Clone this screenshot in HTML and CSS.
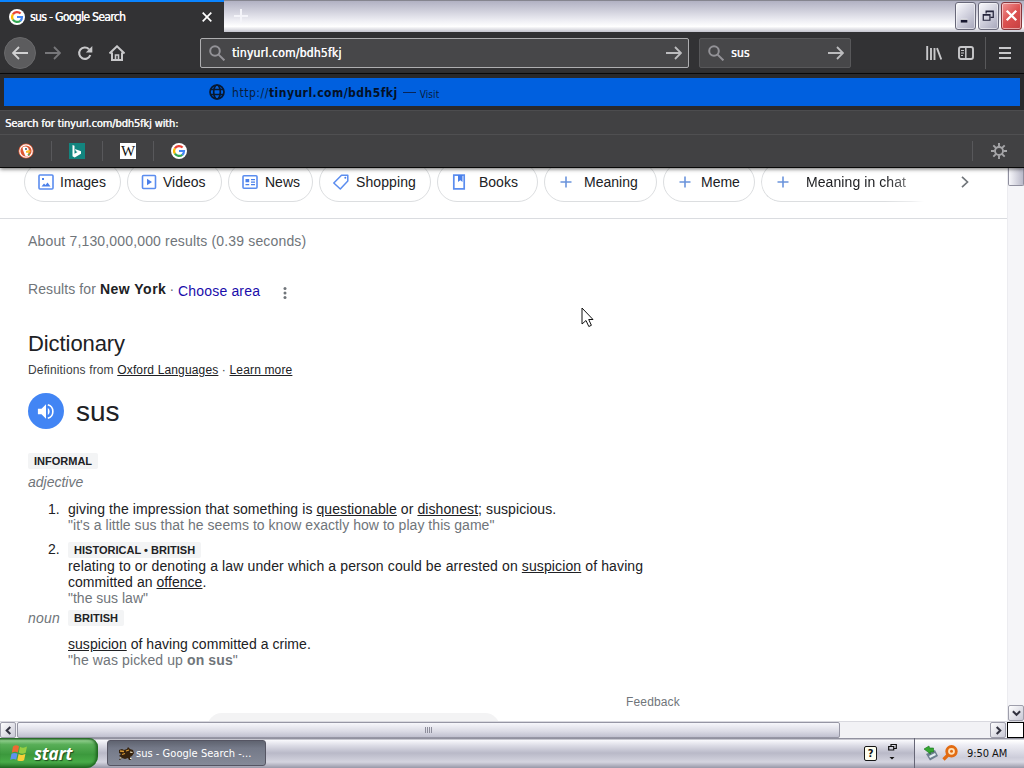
FILE: index.html
```html
<!DOCTYPE html>
<html lang="en">
<head>
<meta charset="utf-8">
<title>sus - Google Search</title>
<link rel="stylesheet" href="styles.css">
</head>
<body>
<svg width="0" height="0" class="defs">
  <symbol id="google" viewBox="0 0 16 16"><circle cx="8" cy="8" r="8" fill="#fff"/><g fill="none" stroke-width="2.2"><path d="M3.9 5.3A5 5 0 0 1 11.6 4.5" stroke="#ea4335"/><path d="M3.9 10.7A5 5 0 0 1 3.9 5.3" stroke="#fbbc05"/><path d="M11.4 11.7A5 5 0 0 1 3.9 10.7" stroke="#34a853"/><path d="M8 8h5A5 5 0 0 1 11.3 11.8" stroke="#4285f4"/></g></symbol>
  <symbol id="search" viewBox="0 0 16 16"><g fill="none" stroke="#939297" stroke-width="2"><circle cx="6" cy="6" r="4.8"/><path d="M9.6 9.6l5.8 5.8"/></g></symbol>
  <symbol id="arrow" viewBox="0 0 16 16"><path d="M0 8h15M9 2l6 6-6 6" fill="none" stroke="currentColor" stroke-width="1.8"/></symbol>
  <symbol id="plus" viewBox="0 0 12 12"><path d="M6 .5v11M.5 6h11" stroke="#6b94dc" stroke-width="1.6"/></symbol>
</svg>
<div class="screen">
  <header class="tabbar">
    <div class="tab"><svg class="i16"><use href="#google"/></svg><span class="tab-title">sus - Google Search</span>
      <svg class="tab-close" viewBox="0 0 10 10"><path d="M.7.7l8.6 8.6M9.3.7L.7 9.3" stroke="#fff" stroke-width="1.7"/></svg></div>
    <div class="titlebar">
      <svg class="newtab" viewBox="0 0 14 14"><path d="M7 0v14M0 7h14" stroke="#f4f4f9" stroke-width="2"/></svg>
      <div class="winbtns">
        <div class="winbtn"><svg viewBox="0 0 20 26"><path d="M5 18.5h7" stroke="#fff" stroke-width="4"/><path d="M5 19h7" stroke="#181830" stroke-width="3"/></svg></div>
        <div class="winbtn"><svg viewBox="0 0 20 26"><g fill="none" stroke="#25253c" stroke-width="1.3"><path d="M7.500 11V8.500h7.500v6.500h-3M7.500 9h7"/><path d="M4.500 12h7v6h-7zM4.500 12.600h7"/></g></svg></div>
        <div class="winbtn close"><svg viewBox="0 0 20 26"><path d="M5 8l10 10M15 8L5 18" stroke="#fff" stroke-width="2.500"/></svg></div>
      </div>
    </div>
  </header>

  <nav class="toolbar">
    <div class="back"><svg class="i16 flip"><use href="#arrow"/></svg></div>
    <svg class="i16 forward"><use href="#arrow"/></svg>
    <svg class="i16 reload" viewBox="0 0 16 16"><path d="M13.300 10A5.700 5.700 0 1 1 12 4.200" fill="none" stroke="#c8c8ca" stroke-width="2.100"/><path d="M15.300 1v6.500H8.800z" fill="#c8c8ca"/></svg>
    <svg class="i16 home" viewBox="0 0 16 16"><path d="M.5 8.500L8 1.300l7.500 7.200M3 7.500V15h10V7.500" fill="none" stroke="#c8c8ca" stroke-width="2"/><path d="M6.500 15v-5h3v5" fill="none" stroke="#c8c8ca" stroke-width="1.600"/></svg>
    <div class="field url"><svg class="i16"><use href="#search"/></svg><span class="url-text">tinyurl.com/bdh5fkj</span><svg class="i16 go"><use href="#arrow"/></svg></div>
    <div class="field find"><svg class="i16"><use href="#search"/></svg><span class="find-text">sus</span><svg class="i16 go"><use href="#arrow"/></svg></div>
    <div class="tools">
      <svg class="i16" viewBox="0 0 16 16"><path d="M1.200 1v14M5 3v12M8.500 3v12M11 3.200l4.300 11.300" stroke="#c8c8ca" stroke-width="1.900"/></svg>
      <svg class="i16" viewBox="0 0 16 16"><g fill="none" stroke="#c8c8ca"><rect x="1" y="2" width="14" height="12" rx="2" stroke-width="1.900"/><path d="M7.800 2v12" stroke-width="1.500"/><path d="M3 5.500h3M3 8h3M3 10.500h2"/></g></svg>
      <i class="tool-sep"></i>
      <svg class="i16 menu" viewBox="0 0 16 16"><path d="M2 3h12M2 8h12M2 13h12" stroke="#c8c8ca" stroke-width="2"/></svg>
    </div>
  </nav>

  <section class="popup">
    <div class="suggestion"><svg class="i16" viewBox="0 0 16 16"><g fill="none" stroke="#081830" stroke-width="1.700"><circle cx="8" cy="8" r="7"/><ellipse cx="8" cy="8" rx="3.300" ry="7"/><path d="M1.500 5.500h13M1.500 10.500h13"/></g></svg>
      <span class="sug-http">http://</span><span class="sug-host">tinyurl.com/bdh5fkj</span><span class="sug-dash"></span><span class="sug-visit">Visit</span></div>
    <div class="oneoff-title">Search for tinyurl.com/bdh5fkj with:</div>
    <div class="oneoffs">
      <div class="engine"><svg class="i16" viewBox="0 0 16 16"><circle cx="8" cy="8" r="7.600" fill="#de5833"/><circle cx="8" cy="8" r="6.200" fill="none" stroke="#fff" stroke-width="1.200"/><path d="M4.500 4.500C7 2.500 11 4 10.800 7.500L10 12.800c-1 .5-2 .4-2.800 0L5 7z" fill="#fff"/><path d="M8 8c2-1 4.500-.8 4.500.3S10.500 10 8 9.800z" fill="#fdbf22"/><path d="M9 11.300l3-.7v2z" fill="#4caf50"/><circle cx="8" cy="6" r=".9" fill="#245"/></svg></div>
      <div class="engine"><svg class="i16" viewBox="0 0 16 16"><path fill="#13857f" d="M0 0h16v16H0z"/><path d="M3.500 2l2 .8v8l3-1.800-1.600-.8L6 6l6 2.200v2.600l-6.300 3.700-2.200-1.300z" fill="#fff"/></svg></div>
      <div class="engine"><span class="wiki">W</span></div>
      <div class="engine last"><svg class="i16"><use href="#google"/></svg></div>
      <div class="gear"><svg class="i16" viewBox="0 0 16 16"><g fill="none" stroke="#a5a5a8"><circle cx="8" cy="8" r="4" stroke-width="1.900"/><path d="M8 0v3.500M8 12.500V16M0 8h3.500M12.500 8H16M2.300 2.300l2.600 2.600M11.100 11.100l2.600 2.600M13.700 2.300l-2.600 2.600M4.900 11.100l-2.600 2.600" stroke-width="1.900"/></g></svg></div>
    </div>
  </section>

  <div class="viewport">
    <main class="page">
      <div class="chips">
        <div class="chip c1"><svg class="i16" viewBox="0 0 16 16"><rect x="1" y="1" width="14" height="14" rx="1" fill="none" stroke="#5b8def" stroke-width="1.600"/><path d="M3.500 12.500L6 9.500l1.500 1.500 2-2.500 3 4zM4 4h2v2H4z" fill="#4a80ea"/></svg><span>Images</span></div>
        <div class="chip c2"><svg class="i16" viewBox="0 0 16 16"><rect x="1.500" y="1.500" width="13" height="13" rx="1" fill="none" stroke="#5b8def" stroke-width="1.600"/><path d="M6 4.800l5 3.200-5 3.200z" fill="#4a80ea"/></svg><span>Videos</span></div>
        <div class="chip c3"><svg class="i16" viewBox="0 0 16 16"><rect x="1" y="1.800" width="14" height="12.400" rx="1" fill="none" stroke="#5b8def" stroke-width="1.600"/><path d="M3.500 5h3.700v3.200H3.500zM9 5h4v1.300H9zM9 7.500h4v1.200H9zM3.500 10h3.700v1.300H3.500zM9 10h4v1.300H9z" fill="#4a80ea"/></svg><span>News</span></div>
        <div class="chip c4"><svg class="i16" viewBox="0 0 16 16"><path d="M8.500 1.200h6.300V7l-7.500 8-6.500-6z" fill="none" stroke="#5b8def" stroke-width="1.500" stroke-linejoin="round"/><circle cx="12.300" cy="3.800" r="1" fill="#4a80ea"/></svg><span>Shopping</span></div>
        <div class="chip c5"><svg class="i16" viewBox="0 0 16 16"><path d="M2.800 1.200h10.400v13.600H2.800z" fill="none" stroke="#5b8def" stroke-width="1.700"/><path d="M7 1h4.500v7L9.300 6.300 7 8z" fill="#4a80ea"/></svg><span>Books</span></div>
        <div class="chip c6"><svg class="i12"><use href="#plus"/></svg><span>Meaning</span></div>
        <div class="chip c7"><svg class="i12"><use href="#plus"/></svg><span>Meme</span></div>
        <div class="chip c8"><svg class="i12"><use href="#plus"/></svg><span>Meaning in chat</span></div>
        <svg class="chev" viewBox="0 0 8 12"><path d="M1 .8L6.500 6 1 11.200" fill="none" stroke="#70757a" stroke-width="1.700"/></svg>
      </div>
      <div class="stats"><span class="t-stats">About 7,130,000,000 results (0.39 seconds)</span></div>
      <div class="area"><span class="t-for">Results for <b>New York</b></span><span class="t-dot">·</span><a class="t-choose">Choose area</a><svg class="kebab" viewBox="0 0 4 12"><g fill="#70757a"><circle cx="2" cy="1.600" r="1.500"/><circle cx="2" cy="6" r="1.500"/><circle cx="2" cy="10.400" r="1.500"/></g></svg></div>
      <h2 class="dict">Dictionary</h2>
      <div class="source">Definitions from <u>Oxford Languages</u> · <u>Learn more</u></div>
      <div class="word"><div class="speaker"><svg viewBox="0 0 20 18"><path d="M1 6h4l5-5v16l-5-5H1z" fill="#fff"/><path d="M12 5.200c2.700 1.500 2.700 6.100 0 7.600z" fill="#fff"/><path d="M12 1.500c7.500 2 7.500 13 0 15" fill="none" stroke="#fff" stroke-width="1.800"/></svg></div><span class="headword">sus</span></div>
      <div class="label informal">INFORMAL</div>
      <div class="pos">adjective</div>
      <div class="def first"><span class="num">1.</span><div><div class="line d1">giving the impression that something is <u>questionable</u> or <u>dishonest</u>; suspicious.</div><div class="line q q1">"it's a little sus that he seems to know exactly how to play this game"</div></div></div>
      <div class="def second"><span class="num">2.</span><div><div class="label hist">HISTORICAL • BRITISH</div><div class="line d2">relating to or denoting a law under which a person could be arrested on <u>suspicion</u> of having</div><div class="line d3">committed an <u>offence</u>.</div><div class="line q q2">"the sus law"</div></div></div>
      <div class="nounrow"><span class="noun">noun</span><div class="label brit">BRITISH</div></div>
      <div class="def third"><div><div class="line d4"><u>suspicion</u> of having committed a crime.</div><div class="line q q3">"he was picked up <b>on sus</b>"</div></div></div>
      <div class="feedback">Feedback</div>
      <div class="more"></div>
    </main>
    <div class="vscroll"><div class="vthumb"></div><div class="sbtn"><svg viewBox="0 0 10 8"><path d="M1 1.500L5 5.500 9 1.500" fill="none" stroke="#333340" stroke-width="2.300"/></svg></div></div>
  </div>
  <div class="hscroll">
    <div class="sbtn"><svg viewBox="0 0 8 10"><path d="M6 1L2 5l4 4" fill="none" stroke="#333340" stroke-width="2.300"/></svg></div>
    <div class="hthumb"><i></i><i></i><i></i><i></i></div><div class="htrack"></div>
    <div class="sbtn"><svg viewBox="0 0 8 10"><path d="M2 1l4 4-4 4" fill="none" stroke="#333340" stroke-width="2.300"/></svg></div>
    <div class="corner"></div>
  </div>

  <footer class="taskbar">
    <div class="start"><svg class="flag" viewBox="0 0 18 18"><path d="M3 2.500C5 1 7 1 9 2.300L7.800 8.500C6 7.500 4 7.500 1.800 8.700z" fill="#ee6933"/><path d="M10 2.800c2 1.200 4.500 1.200 7-.2l-1.300 6.200c-2.500 1.300-4.700 1.200-6.900 0z" fill="#96ce42"/><path d="M1.500 9.800c2-1.200 4-1.100 6 0l-1.300 6c-2-1.200-4-1.100-6 .2z" fill="#5f92ee"/><path d="M8.600 10c2.200 1.200 4.500 1.200 6.800.1l-1.300 6.100c-2.500 1.200-4.800 1.100-6.800 0z" fill="#f8cf38"/></svg><span class="start-text">start</span></div>
    <div class="task"><svg class="i16" viewBox="0 0 16 16"><path d="M1 5l3-1 2 1 3-1 1-2 2 2 3 1 1 3-2 3-2 1 1 3h-2l-1-2-3 1-3-1-2 2H1l2-3-2-1 2-2-2-1z" fill="#35220e"/><path d="M2 6l4 .5M8 6l3-1M4 9.500l3-1" stroke="#d99a35" stroke-width="1.300"/><path d="M12 7l2.500.5M2 13h1.500M12 13.500h1.500" stroke="#fff3cf" stroke-width="1.200"/></svg><span class="task-text">sus - Google Search -...</span></div>
    <div class="langbar">
      <div class="help">?</div>
      <svg class="restore" viewBox="0 0 9 17"><path d="M3 3V1.500h5.300v4H6M.7 3.500h5v3.500h-5z" fill="none" stroke="#111" stroke-width="1.200"/><path d="M1.500 14h5L4 16.500z" fill="#111"/></svg>
    </div>
    <div class="tray">
      <svg class="usb" viewBox="0 0 16 16"><path d="M3 9l9-4 3 6-8 4.500z" fill="#6d7f8f"/><path d="M6 11l6-3 1 2-6 3z" fill="#e2edf2"/><path d="M1 4l5-3 .5 2h4v4H7l.5 2z" fill="#36a831" stroke="#16731c" stroke-width=".6"/></svg>
      <svg class="key" viewBox="0 0 16 16"><circle cx="9.500" cy="6.300" r="4.800" fill="#ffe1b8" stroke="#e26b12" stroke-width="2.800"/><circle cx="9.500" cy="6.300" r="1.500" fill="#e26b12"/><path d="M6 10l-4.500 4.500" stroke="#e26b12" stroke-width="3.200"/></svg>
      <span class="clock">9:50 AM</span>
    </div>
  </footer>
  <svg class="cursor" viewBox="0 0 13 21"><path d="M1 1v16l4-3.500 2.800 6 2.600-1.200-2.700-5.800H12z" fill="#fff" stroke="#111"/></svg>
</div>
</body>
</html>
```
FILE: styles.css
```css
* { box-sizing: border-box; }
body { margin: 0; }
svg { display: block; flex: none; }
.defs { position: absolute; }
.screen { position: relative; width: 1024px; height: 768px; overflow: hidden; display: flex; flex-direction: column; background: #fff; font-family: "DejaVu Sans Condensed", "DejaVu Sans", sans-serif; font-stretch: condensed; font-size: 11px; white-space: nowrap; }
.screen > * { flex: none; }
.i16 { width: 16px; height: 16px; }
.i12 { width: 12px; height: 12px; }

.tabbar { display: flex; height: 32px; }
.tab { width: 224px; border-top: 2px solid #0a84ff; background: #323234; display: flex; align-items: center; padding: 0 12px 0 9px; color: #f9f9fa; }
.tab-title { margin-left: 5px; flex: 1; font-size: 12px; letter-spacing: -.64px; text-shadow: .3px 0 #fff; }
.tab-close { width: 10px; height: 10px; }
.titlebar { flex: 1; display: flex; align-items: flex-start; justify-content: space-between; padding: 3px 2px 0 10px; border-top: 1px solid #85858f; background: linear-gradient(#b1b1c3, #c4c4d2 20%, #ededf3 62%, #fff 82%, #c5c5cf); }
.newtab { width: 14px; height: 14px; margin-top: 5px; }
.winbtns { display: flex; gap: 2px; margin-top: -2px; }
.winbtn { width: 21px; height: 28px; border: 1px solid #686879; border-radius: 3px; background: linear-gradient(135deg, #fafafd, #d5d5e1 45%, #a6a6ba); box-shadow: inset 0 0 0 1px #ffffff80; }
.winbtn svg { width: 19px; height: 25px; }
.close { background: linear-gradient(135deg, #ef9696, #dc5150 50%, #c63e40); border-color: #88363c; }

.toolbar { height: 42px; display: flex; align-items: center; background: #323234; border-bottom: 1px solid #0b0b0c; color: #c8c8ca; padding: 0 0 0 4px; }
.back { width: 32px; height: 32px; border-radius: 50%; background: #5c5c5e; border: 1px solid #69696b; display: grid; place-items: center; color: #d1d1d2; }
.flip { transform: scaleX(-1); }
.forward { margin-left: 9px; color: #77777a; }
.reload { margin-left: 16px; }
.home { margin-left: 16px; }
.field { height: 30px; background: #474749; border: 1px solid #58585a; border-radius: 2px; display: flex; align-items: center; padding: 0 6px 0 8px; color: #f9f9fa; text-shadow: .4px 0 #fff; font-size: 12px; }
.field span { padding-top: 1px; }
.url { width: 489px; border-color: #aeaeb0; margin-left: 75px; }
.find { width: 152px; margin-left: 10px; }
.url-text { margin-left: 7px; letter-spacing: .22px; }
.find-text { margin-left: 7px; letter-spacing: .2px; }
.go { margin-left: auto; color: #bcbcbe; }
.tools { margin-left: auto; display: flex; align-items: center; padding-right: 11px; }
.tools svg + svg { margin-left: 16px; }
.tool-sep { width: 1px; height: 32px; background: #58585a; margin: 0 11px 0 11px; }

.popup { position: relative; z-index: 1; height: 94px; background: #414143; border-bottom: 1px solid #080808; box-shadow: 0 1px 4px #0009; color: #f5f5f6; }
.suggestion { height: 36px; border: 4px solid #29292b; background: #0060df; color: #081c3c; display: flex; align-items: center; padding: 0 0 0 205px; }
.sug-http { margin-left: 7px; font-size: 12px; letter-spacing: .55px; }
.sug-host { font-size: 12px; font-weight: bold; letter-spacing: .48px; color: #041127; }
.sug-http, .sug-host { padding-top: 1px; }
.sug-dash { width: 13px; height: 1px; background: #082558; margin: 0 4px 0 5px; }
.sug-visit { font-size: 10px; letter-spacing: .1px; padding-top: 4px; }
.oneoff-title { height: 24px; line-height: 25px; padding-left: 5px; font-size: 11px; letter-spacing: -.13px; text-shadow: .4px 0 #fff; border-top: 1px solid #4c4c4e; }
.oneoffs { height: 33px; border-top: 1px solid #4f4f51; display: flex; align-items: center; padding-left: 1px; }
.engine { width: 51px; height: 20px; border-right: 1px solid #58585b; display: grid; place-items: center; }
.last { border-right: 0; margin-left: -1px; }
.wiki { width: 16px; height: 16px; background: #fff; color: #111; font: 15px/16px "Liberation Serif", serif; text-align: center; }
.gear { margin-left: auto; width: 52px; height: 20px; border-left: 1px solid #58585b; display: grid; place-items: center; }

.viewport { height: 553px; display: flex; overflow: hidden; }
.page { width: 1007px; font-family: "Liberation Sans", Arial, sans-serif; font-size: 14px; color: #202124; }
.chips { height: 51px; border-bottom: 1px solid #dadce0; display: flex; gap: 6px; padding-left: 24px; align-items: flex-start; }
.chip { height: 40px; margin-top: -6px; border: 1px solid #dcdee0; border-radius: 20px; display: flex; align-items: center; padding-left: 13px; }
.chip span { margin-left: 7px; }
.c1 { width: 97px; } .c2 { width: 95px; } .c3 { width: 85px; } .c4 { width: 112px; } .c5 { width: 101px; } .c6 { width: 113px; } .c7 { width: 92px; } .c8 { width: 163px; }
.c1 span, .c2 span { margin-left: 6px; }
.c4 span { letter-spacing: .1px; }
.c5 span { margin-left: 12px; }
.c6, .c7, .c8 { padding-left: 15px; }
.c6 span { margin-left: 12px; } .c7 span { margin-left: 10px; } .c8 span { margin-left: 17px; letter-spacing: .08px; }
.c8 { border-right: 0; border-radius: 20px 0 0 20px; -webkit-mask-image: linear-gradient(90deg, #000 76%, #0008 92%, transparent); mask-image: linear-gradient(90deg, #000 76%, #0008 92%, transparent); }
.chev { width: 8px; height: 12px; margin: 8px 0 0 31px; }
.stats { height: 44px; line-height: 44px; padding-left: 28px; color: #70757a; letter-spacing: .16px; }
.area { height: 52px; display: flex; align-items: center; padding-left: 28px; color: #70757a; }
.t-for { letter-spacing: .09px; }
.area b { color: #202124; letter-spacing: .5px; }
.t-dot { margin: 0 4px 0 3px; }
.t-choose { color: #1a0dab; padding-top: 4px; letter-spacing: .17px; }
.kebab { width: 4px; height: 12px; margin: 7px 0 0 23px; }
.dict { margin: 15px 0 0 28px; font-size: 22px; line-height: 28px; font-weight: normal; letter-spacing: -.08px; }
.source { margin: 4px 0 0 28px; font-size: 12px; line-height: 16px; color: #3c4043; letter-spacing: .15px; }
.source u { color: #202124; }
u { text-underline-offset: 1px; }
.word { display: flex; align-items: center; margin: 15px 0 0 28px; height: 36px; }
.speaker { width: 36px; height: 36px; border-radius: 50%; background: #4285f4; display: grid; place-items: center; }
.speaker svg { width: 18px; height: 17px; }
.headword { font-size: 28px; margin-left: 12px; padding-top: 2px; }
.label { width: max-content; height: 16px; line-height: 17px; padding: 0 6px; border-radius: 2px; background: #f3f4f5; font-size: 11px; font-weight: bold; letter-spacing: 0; }
.informal { margin: 24px 0 0 28px; }
.pos { font-style: italic; color: #70757a; line-height: 16px; margin: 5px 0 0 28px; }
.def { display: flex; padding-left: 48px; }
.num { width: 20px; line-height: 16px; }
.line { height: 16px; line-height: 16px; }
.d1 { letter-spacing: .083px; }
.d2 { letter-spacing: .12px; }
.d3, .d4, .q1 { letter-spacing: .042px; }
.q3 { letter-spacing: .11px; }
.q { color: #70757a; }
.first { margin-top: 11px; }
.second { margin-top: 8px; }
.hist { margin-top: 1px; letter-spacing: .02px; }
.nounrow { display: flex; align-items: center; height: 16px; margin: 4px 0 0 28px; }
.noun { width: 40px; font-style: italic; color: #70757a; letter-spacing: .2px; }
.third { margin-top: 10px; padding-left: 68px; }
.feedback { margin: 26px 0 0 626px; font-size: 12px; line-height: 16px; color: #70757a; letter-spacing: .15px; }
.more { width: 293px; height: 30px; margin: 3px 0 0 207px; background: #f3f3f4; border-radius: 15px 15px 0 0; }

.vscroll { width: 17px; background: #f5f5f8; border-left: 1px solid #ececf0; display: flex; flex-direction: column; justify-content: space-between; }
.vthumb { height: 18px; border: 1px solid #8f8f9e; border-top: 0; border-radius: 0 0 2px 2px; background: linear-gradient(90deg, #f7f7fb, #b9b9c9); }
.sbtn { width: 16px; height: 16px; flex: none; border: 1px solid #9e9eab; border-radius: 2px; display: grid; place-items: center; background: linear-gradient(135deg, #fff, #c8c8d5); }
.sbtn svg { width: 9px; height: 9px; }
.hscroll { height: 17px; display: flex; background: #f2f2f5; border-top: 1px solid #d9d9df; }
.hthumb { width: 823px; margin-left: 1px; height: 16px; border: 1px solid #9696a4; border-radius: 2px; background: linear-gradient(#f7f7fb, #dadae4 60%, #c0c0cf); display: flex; align-items: center; justify-content: center; gap: 1px; }
.hthumb i { width: 1px; height: 6px; background: #8d8d9b; }
.htrack { flex: 1; }
.corner { width: 17px; height: 16px; margin-left: 1px; border: 1px solid #000; background: #fff; }

.taskbar { height: 30px; display: flex; background: linear-gradient(#777787, #f7f7fb 8%, #dcdce6 25%, #b9b9c8 50%, #d4d4df 80%, #9898a8); }
.start { width: 98px; display: flex; align-items: center; padding-left: 10px; border-radius: 0 9px 12px 0; background: linear-gradient(#206020, #8bcb88 9%, #58ae57 22%, #3c993d 55%, #48ab48 80%, #226d24); box-shadow: inset -2px 0 3px #1d641e; color: #fff; }
.flag { width: 18px; height: 18px; }
.start-text { font: italic bold 17px "Open Sans", sans-serif; margin-left: 6px; letter-spacing: -.2px; text-shadow: 1px 1px 1px #1c491c; }
.task { width: 159px; height: 26px; margin: 2px 0 0 9px; border: 1px solid #555563; border-radius: 3px; background: linear-gradient(#5f6370, #747988 30%, #858a98); color: #fff; display: flex; align-items: center; padding-left: 10px; }
.task-text { margin-left: 2px; padding-top: 1px; font-size: 11px; letter-spacing: .03px; }
.langbar { margin-left: auto; display: flex; padding: 7px 17px 0 0; gap: 11px; }
.help { width: 13px; height: 15px; margin-top: 1px; border: 1px solid #161616; border-radius: 2px; background: #fffff0; color: #111; font: bold 11px/13px "DejaVu Sans Condensed", sans-serif; text-align: center; }
.restore { width: 9px; height: 17px; margin-top: -2px; }
.tray { width: 110px; display: flex; align-items: center; padding-left: 8px; border-left: 1px solid #666676; background: linear-gradient(#777787, #fff 8%, #ececf3 25%, #cdcdda 65%, #d8d8e3 80%, #9898a8); }
.usb { width: 16px; height: 16px; }
.key { width: 16px; height: 16px; margin-left: 3px; }
.clock { margin-left: 9px; font-size: 11px; letter-spacing: -.08px; color: #111; }
.cursor { position: absolute; left: 581px; top: 307px; width: 13px; height: 21px; z-index: 2; }
```
